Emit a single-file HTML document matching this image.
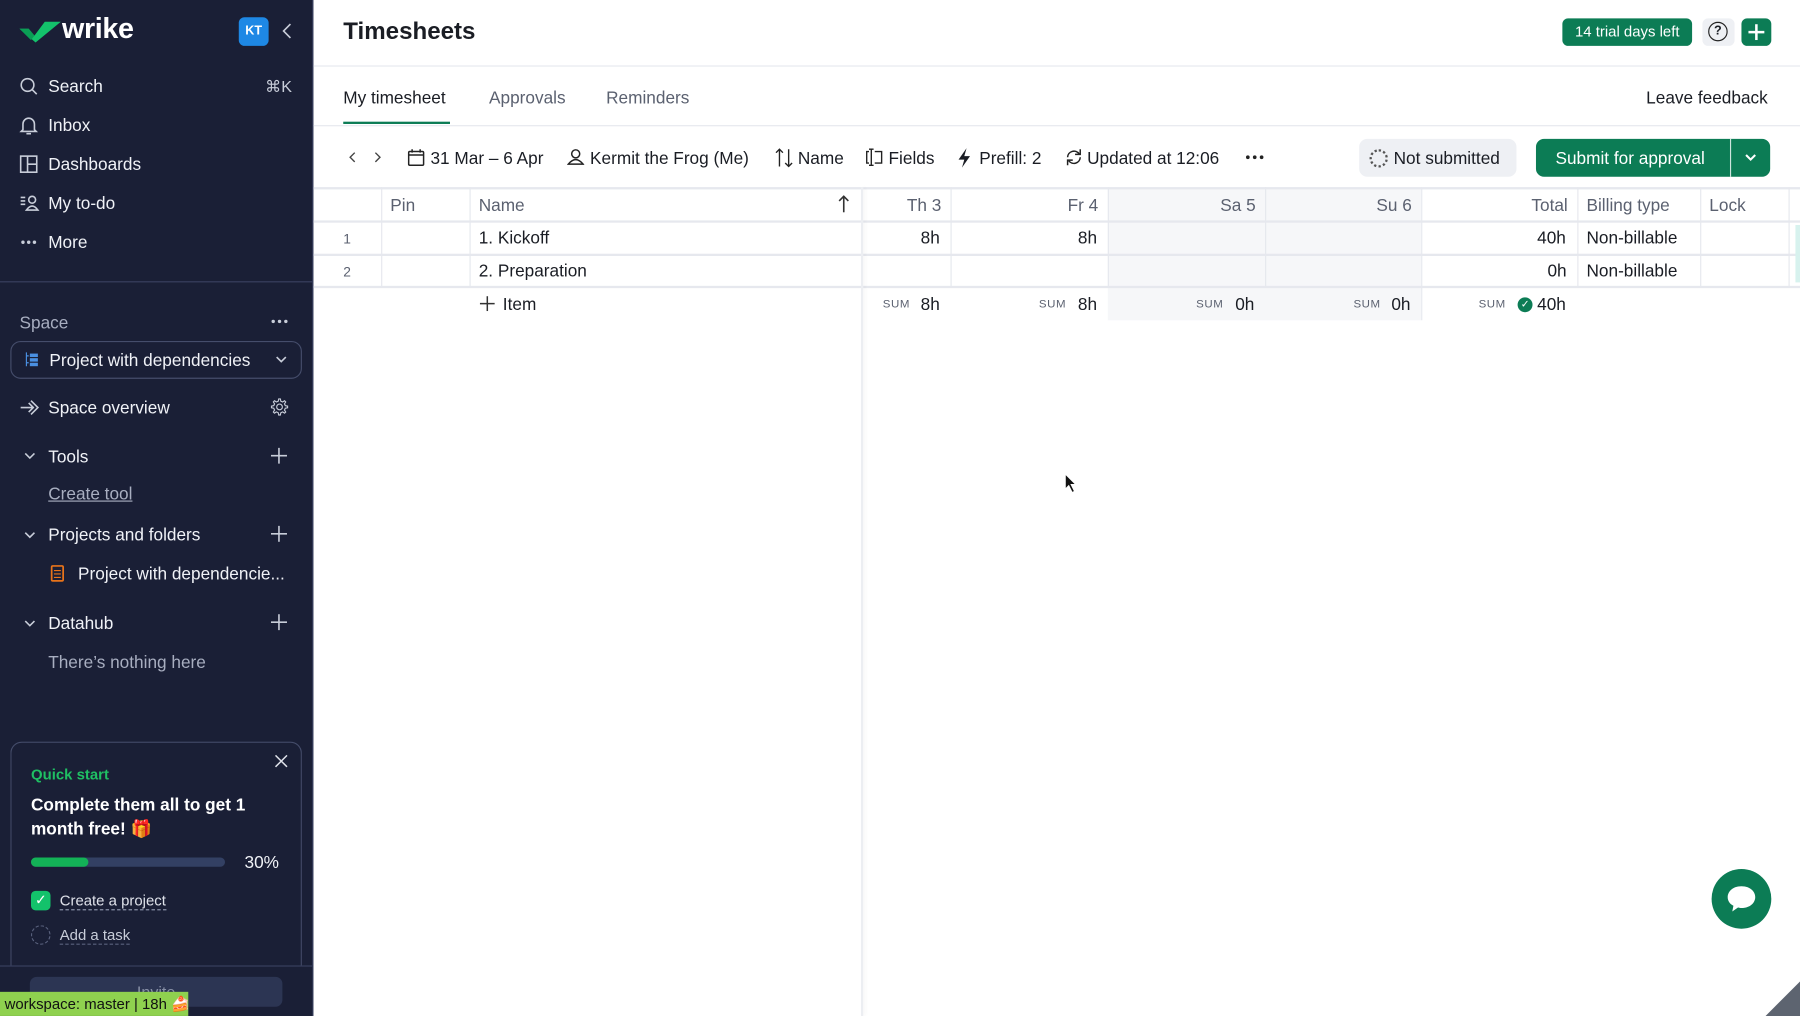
<!DOCTYPE html>
<html><head><meta charset="utf-8"><style>
*{box-sizing:border-box;margin:0;padding:0}
html,body{width:1800px;height:1016px;overflow:hidden;background:#fff;font-family:"Liberation Sans",Arial,sans-serif}
#w{width:1568px;height:885px;transform:scale(1.14796);transform-origin:0 0;position:relative;color:#1a1d24}
.a{position:absolute;white-space:nowrap}
#sb{position:absolute;left:0;top:0;width:273px;height:885px;background:#1a1f36;border-right:1px solid #3a4160;color:#fff}
.nav{font-size:15px;color:#f0f2f7}
.ic{stroke:#c8cdd9;fill:none;stroke-width:1.4}
.th{font-size:15px;color:#5b6170}
.td{font-size:15px}
.sum{font-size:10px;color:#5b6170;letter-spacing:.5px}
.hl{position:absolute;height:1px;background:#e6e8ee}
.vl{position:absolute;width:1px;background:#e6e8ee}
.t1{margin-top:1px}
</style></head><body><div id="w">
<div id="sb">
 <svg class="a" style="left:17px;top:16px" width="36" height="22" viewBox="0 0 36 22"><path d="M0 9 L8 9 L13 15 L22 3 L36 3 L14 21 Z" fill="#13c26b"/><path d="M0 9 L8 9 L13 15 L10 19 Z" fill="#0a9e55"/></svg>
 <div class="a" style="left:54px;top:11px;font-size:25px;font-weight:bold;letter-spacing:-.3px">wrike</div>
 <div class="a" style="left:208px;top:15px;width:26px;height:25px;background:#1e88e5;border-radius:5px;font-size:11px;font-weight:bold;text-align:center;line-height:25px">KT</div>
 <svg class="a" style="left:244px;top:19px" width="12" height="16"><path d="M9 2 L3 8 L9 14" class="ic" stroke-width="1.6"/></svg>
 <svg class="a" style="left:17px;top:67px" width="16" height="16"><circle cx="7" cy="7" r="5.5" class="ic"/><path d="M11 11 L15 15" class="ic"/></svg>
 <div class="a nav" style="left:42px;top:67px">Search</div><div class="a" style="left:231px;top:67px;font-size:14px;color:#c8cdd9">⌘K</div>
 <svg class="a" style="left:17px;top:101px" width="16" height="17"><path d="M3 12 L3 7 A5 5 0 0 1 13 7 L13 12 L14.5 13.5 L1.5 13.5 Z M6 15.5 L10 15.5" class="ic"/></svg>
 <div class="a nav" style="left:42px;top:101px">Inbox</div>
 <svg class="a" style="left:17px;top:135px" width="16" height="16"><rect x="1" y="1" width="14" height="14" class="ic"/><path d="M7 1 V15 M7 8 H15" class="ic"/></svg>
 <div class="a nav" style="left:42px;top:135px">Dashboards</div>
 <svg class="a" style="left:17px;top:169px" width="18" height="16"><path d="M1 3 H5 M1 6 H5 M1 9 H5" class="ic"/><circle cx="11" cy="5" r="3" class="ic"/><path d="M6 14 Q11 7 16 14 Z" class="ic"/></svg>
 <div class="a nav" style="left:42px;top:169px">My to-do</div>
 <svg class="a" style="left:18px;top:209px" width="14" height="4"><circle cx="2" cy="2" r="1.5" fill="#c8cdd9"/><circle cx="7" cy="2" r="1.5" fill="#c8cdd9"/><circle cx="12" cy="2" r="1.5" fill="#c8cdd9"/></svg>
 <div class="a nav" style="left:42px;top:203px">More</div>
 <div class="a" style="left:0;top:245px;width:272px;height:1px;background:#3a4160"></div>
 <div class="a" style="left:17px;top:273px;font-size:15px;color:#a8aec0">Space</div>
 <svg class="a" style="left:236px;top:278px" width="15" height="4"><circle cx="2" cy="2" r="1.5" fill="#c8cdd9"/><circle cx="7.5" cy="2" r="1.5" fill="#c8cdd9"/><circle cx="13" cy="2" r="1.5" fill="#c8cdd9"/></svg>
 <div class="a" style="left:9px;top:297px;width:254px;height:33px;border:1px solid #454d6b;border-radius:9px"></div>
 <svg class="a" style="left:22px;top:306px" width="12" height="14"><path d="M1 1 V13 M1 4 H3 M1 10 H3" stroke="#4a90e2" fill="none"/><rect x="4" y="2" width="7" height="3" fill="#4a90e2"/><rect x="4" y="6" width="7" height="3" fill="#4a90e2"/><rect x="4" y="10" width="7" height="3" fill="#4a90e2"/></svg>
 <div class="a nav" style="left:43px;top:306px">Project with dependencies</div>
 <svg class="a" style="left:239px;top:309px" width="12" height="8"><path d="M2 2 L6 6 L10 2" class="ic" stroke-width="1"/></svg>
 <svg class="a" style="left:17px;top:347px" width="18" height="16"><path d="M1 8 H12 M8 4 L12 8 L8 12 M10 2 L16 8 L10 14" class="ic"/></svg>
 <div class="a nav" style="left:42px;top:347px">Space overview</div>
 <svg class="a" style="left:235px;top:346px" width="17" height="17" viewBox="0 0 24 24"><path d="M12 2.5 L14 2.5 L14.6 5.3 L16.8 6.3 L19.2 4.8 L20.6 6.2 L19.1 8.6 L20.1 10.8 L22.9 11.4 L22.9 13.4 L20.1 14 L19.1 16.2 L20.6 18.6 L19.2 20 L16.8 18.5 L14.6 19.5 L14 22.3 L12 22.3 L11.4 19.5 L9.2 18.5 L6.8 20 L5.4 18.6 L6.9 16.2 L5.9 14 L3.1 13.4 L3.1 11.4 L5.9 10.8 L6.9 8.6 L5.4 6.2 L6.8 4.8 L9.2 6.3 L11.4 5.3 Z" transform="translate(-1 -0.4)" class="ic" stroke-width="1.5"/><circle cx="12" cy="12" r="3.5" class="ic" stroke-width="1.5"/></svg>
 <svg class="a" style="left:20px;top:393px" width="12" height="8"><path d="M2 2 L6 6 L10 2" class="ic" stroke-width="1"/></svg>
 <div class="a nav" style="left:42px;top:390px">Tools</div>
 <svg class="a" style="left:236px;top:390px" width="14" height="14"><path d="M7 0 V14 M0 7 H14" class="ic" stroke-width="1.2"/></svg>
 <div class="a" style="left:42px;top:422px;font-size:15px;color:#a8aec0;text-decoration:underline">Create tool</div>
 <svg class="a" style="left:20px;top:462px" width="12" height="8"><path d="M2 2 L6 6 L10 2" class="ic" stroke-width="1"/></svg>
 <div class="a nav" style="left:42px;top:458px">Projects and folders</div>
 <svg class="a" style="left:236px;top:458px" width="14" height="14"><path d="M7 0 V14 M0 7 H14" class="ic" stroke-width="1.2"/></svg>
 <svg class="a" style="left:44px;top:491px" width="12" height="16"><rect x="1" y="2" width="10" height="13" rx="1" stroke="#e8731a" fill="none" stroke-width="1.5"/><path d="M3 6 H9 M3 9 H9 M3 12 H9" stroke="#e8731a"/></svg>
 <div class="a nav" style="left:68px;top:492px">Project with dependencie...</div>
 <svg class="a" style="left:20px;top:539px" width="12" height="8"><path d="M2 2 L6 6 L10 2" class="ic" stroke-width="1"/></svg>
 <div class="a nav" style="left:42px;top:535px">Datahub</div>
 <svg class="a" style="left:236px;top:535px" width="14" height="14"><path d="M7 0 V14 M0 7 H14" class="ic" stroke-width="1.2"/></svg>
 <div class="a" style="left:42px;top:569px;font-size:15px;color:#a8aec0">There’s nothing here</div>
 <div class="a" style="left:9px;top:646px;width:254px;height:200px;border:1px solid #454d6b;border-bottom:none;border-radius:10px 10px 0 0"></div>
 <svg class="a" style="left:239px;top:657px" width="12" height="12"><path d="M1 1 L11 11 M11 1 L1 11" stroke="#dfe2ea" stroke-width="1.3"/></svg>
 <div class="a" style="left:27px;top:667px;font-size:13px;font-weight:bold;color:#1fbf63">Quick start</div>
 <div class="a" style="left:27px;top:691px;font-size:15px;font-weight:bold;line-height:21px;white-space:normal;width:210px">Complete them all to get 1 month free! 🎁</div>
 <div class="a" style="left:27px;top:747px;width:169px;height:8px;border-radius:4px;background:#334063"><div style="width:50px;height:8px;border-radius:4px;background:#13b257"></div></div>
 <div class="a" style="left:213px;top:743px;font-size:15px;color:#f0f2f7">30%</div>
 <div class="a" style="left:27px;top:776px;width:17px;height:17px;border-radius:4px;background:#13c26b;color:#fff;font-size:12px;text-align:center;line-height:17px">✓</div>
 <div class="a" style="left:52px;top:777px;font-size:13px;color:#dfe2ea;border-bottom:1px dashed #8890a6">Create a project</div>
 <div class="a" style="left:27px;top:806px;width:17px;height:17px;border-radius:50%;border:1px dashed #5a627e"></div>
 <div class="a" style="left:52px;top:807px;font-size:13px;color:#c8cdd9;border-bottom:1px dashed #5a627e">Add a task</div>
 <div class="a" style="left:0;top:841px;width:272px;height:44px;background:#1a1f36;border-top:1px solid #3a4160"></div>
 <div class="a" style="left:26px;top:851px;width:220px;height:26px;border-radius:6px;background:#2c3553;text-align:center;font-size:14px;color:#8890a6;line-height:26px">Invite</div>
 <div class="a" style="left:0;top:864px;width:164px;height:21px;background:#8fd14f;color:#111;font-size:13px;line-height:21px;padding-left:4px">workspace: master | 18h 🍰</div>
</div>

<div class="a" style="left:299px;top:16px;font-size:21px;font-weight:bold">Timesheets</div>
<div class="a" style="left:1361px;top:16px;width:113px;height:24px;border-radius:5px;background:#0c7c55;color:#fff;font-size:13px;text-align:center;line-height:24px">14 trial days left</div>
<div class="a" style="left:1483px;top:16px;width:28px;height:24px;border-radius:5px;background:#eef0f4"></div>
<div class="a" style="left:1488px;top:19px;width:17px;height:17px;border-radius:50%;border:1.5px solid #222;font-size:11px;text-align:center;line-height:15px;font-weight:bold">?</div>
<div class="a" style="left:1517px;top:16px;width:26px;height:24px;border-radius:5px;background:#0c7c55"></div>
<svg class="a" style="left:1523px;top:21px" width="14" height="14"><path d="M7 0 V14 M0 7 H14" stroke="#fff" stroke-width="2.2"/></svg>
<div class="hl" style="left:273px;top:57px;width:1295px"></div>
<div class="a" style="left:299px;top:77px;font-size:15px">My timesheet</div>
<div class="a" style="left:299px;top:106px;width:93px;height:2px;background:#0c7c55"></div>
<div class="a" style="left:426px;top:77px;font-size:15px;color:#5b6170">Approvals</div>
<div class="a" style="left:528px;top:77px;font-size:15px;color:#5b6170">Reminders</div>
<div class="a" style="left:1434px;top:77px;font-size:15px">Leave feedback</div>
<div class="hl" style="left:273px;top:109px;width:1295px"></div>

<svg class="a" style="left:303px;top:132px" width="30" height="10"><path d="M6 1 L2 5 L6 9 M24 1 L28 5 L24 9" stroke="#444" fill="none" stroke-width="1.2"/></svg>
<svg class="a" style="left:355px;top:129px" width="15" height="16"><rect x="1" y="3" width="13" height="12" rx="1" fill="none" stroke="#222" stroke-width="1.3"/><path d="M1 6 H14 M4 1 V4 M11 1 V4" stroke="#222" stroke-width="1.3"/></svg>
<div class="a td" style="left:375px;top:130px">31 Mar – 6 Apr</div>
<svg class="a" style="left:494px;top:129px" width="15" height="16"><circle cx="7.5" cy="5" r="3.5" fill="none" stroke="#222" stroke-width="1.3"/><path d="M1 14 Q7.5 6 14 14 Z" fill="none" stroke="#222" stroke-width="1.3"/></svg>
<div class="a td" style="left:514px;top:130px">Kermit the Frog (Me)</div>
<svg class="a" style="left:675px;top:129px" width="16" height="17"><path d="M4 16 V1 M1 4 L4 1 L7 4 M12 1 V16 M9 13 L12 16 L15 13" stroke="#222" fill="none" stroke-width="1.2"/></svg>
<div class="a td" style="left:695px;top:130px">Name</div>
<svg class="a" style="left:753px;top:129px" width="17" height="16"><path d="M4 3 H2 V13 H4 M9 3 H15 V13 H9 M6 1 V15 M4 1 H8 M4 15 H8" fill="none" stroke="#222" stroke-width="1.2"/></svg>
<div class="a td" style="left:774px;top:130px">Fields</div>
<svg class="a" style="left:834px;top:129px" width="12" height="17"><path d="M8 0 L1 10 L6 10 L4 17 L11 7 L6 7 Z" fill="#1a1d24"/></svg>
<div class="a td" style="left:853px;top:130px">Prefill: 2</div>
<svg class="a" style="left:927px;top:129px" width="17" height="16"><path d="M3 8 A5.5 5.5 0 0 1 13 5 M14 8 A5.5 5.5 0 0 1 4 11" stroke="#222" fill="none" stroke-width="1.3"/><path d="M14 1 V5.5 H9.5 M3 15 V10.5 H7.5" stroke="#222" fill="none" stroke-width="1.3"/></svg>
<div class="a td" style="left:947px;top:130px">Updated at 12:06</div>
<svg class="a" style="left:1085px;top:135px" width="16" height="4"><circle cx="2" cy="2" r="1.6" fill="#222"/><circle cx="8" cy="2" r="1.6" fill="#222"/><circle cx="14" cy="2" r="1.6" fill="#222"/></svg>
<div class="a" style="left:1184px;top:121px;width:137px;height:33px;border-radius:7px;background:#eef0f4"></div>
<div class="a" style="left:1193px;top:130px;width:16px;height:16px;border-radius:50%;border:2px dotted #555"></div>
<div class="a td" style="left:1214px;top:130px">Not submitted</div>
<div class="a" style="left:1338px;top:121px;width:204px;height:33px;border-radius:7px;background:#0c7c55"></div>
<div class="a" style="left:1507px;top:121px;width:1px;height:33px;background:#fff;opacity:.8"></div>
<div class="a" style="left:1355px;top:130px;font-size:15px;color:#fff">Submit for approval</div>
<svg class="a" style="left:1519px;top:133px" width="12" height="8"><path d="M2 2 L6 6 L10 2" stroke="#fff" stroke-width="1.8" fill="none"/></svg>

<div class="a" style="left:965px;top:163px;width:273px;height:116px;background:#f6f7f9"></div>
<div class="hl" style="left:273px;top:163px;width:1295px;height:2px"></div>
<div class="hl" style="left:273px;top:192px;width:1295px;height:2px"></div>
<div class="hl" style="left:273px;top:221px;width:1295px;height:2px"></div>
<div class="hl" style="left:273px;top:249px;width:1295px;height:2px"></div>
<div class="vl" style="left:332px;top:163px;height:87px"></div>
<div class="vl" style="left:409px;top:163px;height:87px"></div>
<div class="a" style="left:750px;top:163px;width:2px;height:722px;background:#eceef2;box-shadow:2px 0 3px rgba(0,0,0,.04)"></div>
<div class="vl" style="left:828px;top:163px;height:87px"></div>
<div class="vl" style="left:965px;top:163px;height:87px"></div>
<div class="vl" style="left:1102px;top:163px;height:87px"></div>
<div class="vl" style="left:1238px;top:163px;height:116px"></div>
<div class="vl" style="left:1374px;top:163px;height:87px"></div>
<div class="vl" style="left:1481px;top:163px;height:87px"></div>
<div class="vl" style="left:1558px;top:163px;height:87px"></div>
<div class="a th" style="left:340px;top:171px">Pin</div>
<div class="a th" style="left:417px;top:171px">Name</div>
<svg class="a" style="left:730px;top:170px" width="10" height="15"><path d="M5 15 V1 M1 5 L5 1 L9 5" stroke="#333" fill="none" stroke-width="1.4"/></svg>
<div class="a th" style="left:790px;top:171px">Th 3</div>
<div class="a th" style="left:930px;top:171px">Fr 4</div>
<div class="a th" style="left:1063px;top:171px">Sa 5</div>
<div class="a th" style="left:1199px;top:171px">Su 6</div>
<div class="a th" style="left:1334px;top:171px">Total</div>
<div class="a th" style="left:1382px;top:171px">Billing type</div>
<div class="a th" style="left:1489px;top:171px">Lock</div>
<div class="a" style="left:299px;top:201px;font-size:12px;color:#5b6170">1</div>
<div class="a td" style="left:417px;top:199px">1. Kickoff</div>
<div class="a td" style="left:802px;top:199px">8h</div>
<div class="a td" style="left:939px;top:199px">8h</div>
<div class="a td" style="left:1339px;top:199px">40h</div>
<div class="a td" style="left:1382px;top:199px">Non-billable</div>
<div class="a" style="left:299px;top:230px;font-size:12px;color:#5b6170">2</div>
<div class="a td" style="left:417px;top:228px">2. Preparation</div>
<div class="a td" style="left:1348px;top:228px">0h</div>
<div class="a td" style="left:1382px;top:228px">Non-billable</div>
<div class="a" style="left:1564px;top:196px;width:4px;height:50px;background:#d7f2ee"></div>
<svg class="a" style="left:418px;top:258px" width="13" height="13"><path d="M6.5 0 V13 M0 6.5 H13" stroke="#333" stroke-width="1.3"/></svg>
<div class="a td" style="left:438px;top:257px">Item</div>
<div class="a sum" style="left:769px;top:260px">SUM</div><div class="a td" style="left:802px;top:257px">8h</div>
<div class="a sum" style="left:905px;top:260px">SUM</div><div class="a td" style="left:939px;top:257px">8h</div>
<div class="a sum" style="left:1042px;top:260px">SUM</div><div class="a td" style="left:1076px;top:257px">0h</div>
<div class="a sum" style="left:1179px;top:260px">SUM</div><div class="a td" style="left:1212px;top:257px">0h</div>
<div class="a sum" style="left:1288px;top:260px">SUM</div>
<div class="a" style="left:1322px;top:259px;width:13px;height:13px;border-radius:50%;background:#0c7c55;color:#fff;font-size:9px;text-align:center;line-height:13px">✓</div>
<div class="a td" style="left:1339px;top:257px">40h</div>

<svg class="a" style="left:927px;top:412px" width="12" height="18"><path d="M1 1 L1 14 L4 11 L7 17 L9 16 L6 10 L10 10 Z" fill="#111" stroke="#fff" stroke-width=".8"/></svg>
<div class="a" style="left:1491px;top:757px;width:52px;height:52px;border-radius:50%;background:#0c7c55"></div>
<svg class="a" style="left:1502px;top:769px" width="30" height="28"><path d="M15 3 C7 3 3 8 3 12.5 C3 16 5 18.5 8 20 L7 25 L12 21.5 C13 21.7 14 22 15 22 C23 22 27 17 27 12.5 C27 8 23 3 15 3 Z" fill="#fff"/></svg>
<svg class="a" style="left:1538px;top:855px" width="30" height="30"><path d="M30 0 L30 30 L0 30 Z" fill="#5d6470"/></svg>
</div></body></html>
